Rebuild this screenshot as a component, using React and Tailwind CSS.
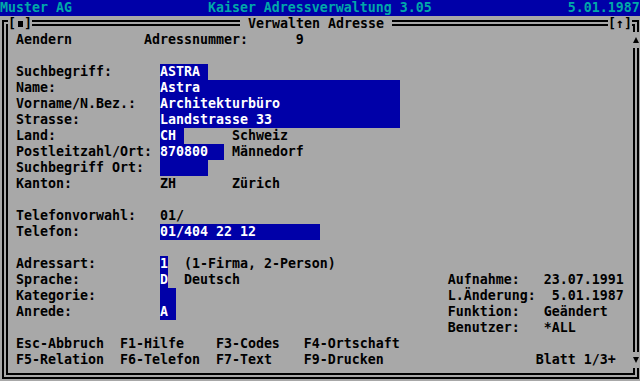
import React from 'react'

const BLUE = 'bg-[#0000a8]'

function Field({ text = '', w }) {
  return (
    <span className={`inline-block h-4 align-top ${BLUE} text-white`}>{text.padEnd(w)}</span>
  )
}

function Line({ children }) {
  return <div className="h-4 leading-4 whitespace-pre">{children}</div>
}

function Entry({ label, children }) {
  return (
    <Line>
      {label.padEnd(18)}
      {children}
    </Line>
  )
}

export default function App() {
  return (
    <div className="w-[640px] h-[381px] overflow-hidden bg-[#a8a8a8] text-black font-['DejaVu_Sans_Mono','Liberation_Mono',monospace] text-[13.29px] font-bold">
      {/* Statuszeile oben */}
      <div className={`h-4 leading-4 whitespace-pre ${BLUE} text-[#00a8a8]`}>
        {'Muster AG'.padEnd(26) + 'Kaiser Adressverwaltung 3.05'.padEnd(45) + '5.01.1987'}
      </div>

      {/* Fenster */}
      <div className="relative h-[365px] pt-[4px]">
        <div className="ml-[2px] mr-[1px] h-[359px] border-[6px] border-double border-black pt-[6px] pl-[8px]">
          <Line>{'Aendern'.padEnd(16) + 'Adressnummer:'.padEnd(19) + '9'}</Line>
          <Line />
          <Entry label="Suchbegriff:"><Field text="ASTRA" w={6} /></Entry>
          <Entry label="Name:"><Field text="Astra" w={30} /></Entry>
          <Entry label="Vorname/N.Bez.:"><Field text="Architekturbüro" w={30} /></Entry>
          <Entry label="Strasse:"><Field text="Landstrasse 33" w={30} /></Entry>
          <Entry label="Land:"><Field text="CH" w={3} />{'      Schweiz'}</Entry>
          <Entry label="Postleitzahl/Ort:"><Field text="870800" w={8} />{' Männedorf'}</Entry>
          <Entry label="Suchbegriff Ort:"><Field w={6} /></Entry>
          <Entry label="Kanton:">{'ZH'.padEnd(9) + 'Zürich'}</Entry>
          <Line />
          <Entry label="Telefonvorwahl:">01/</Entry>
          <Entry label="Telefon:"><Field text="01/404 22 12" w={20} /></Entry>
          <Line />
          <Entry label="Adressart:"><Field text="1" w={1} />{'  (1-Firma, 2-Person)'}</Entry>
          <Entry label="Sprache:"><Field text="D" w={1} />{'  Deutsch'.padEnd(35) + 'Aufnahme:'.padEnd(12) + '23.07.1991'}</Entry>
          <Entry label="Kategorie:"><Field w={2} />{''.padEnd(34) + 'L.Änderung:'.padEnd(12) + ' 5.01.1987'}</Entry>
          <Entry label="Anrede:"><Field text="A" w={2} />{''.padEnd(34) + 'Funktion:'.padEnd(12) + 'Geändert'}</Entry>
          <Line>{''.padEnd(54) + 'Benutzer:'.padEnd(12) + '*ALL'}</Line>
          <Line>{'Esc-Abbruch'.padEnd(13) + 'F1-Hilfe'.padEnd(12) + 'F3-Codes'.padEnd(11) + 'F4-Ortschaft'}</Line>
          <Line>{'F5-Relation'.padEnd(13) + 'F6-Telefon'.padEnd(12) + 'F7-Text'.padEnd(11) + 'F9-Drucken'.padEnd(29) + 'Blatt 1/3+'}</Line>
        </div>

        {/* Titel und Knöpfe über dem Rahmen */}
        <div className="absolute left-[8px] top-0 h-4 leading-4 whitespace-pre bg-[#a8a8a8] flex items-center">
          [<span className="w-2 h-4 flex items-center justify-center"><span className="w-[5px] h-[6px] bg-black" /></span>]
        </div>
        <div className="absolute left-[240px] top-0 h-4 leading-4 whitespace-pre bg-[#a8a8a8]">{' Verwalten Adresse '}</div>
        <div className="absolute left-[608px] top-0 h-4 leading-4 whitespace-pre bg-[#a8a8a8]">[↑]</div>
        {/* Scrollpfeile */}
        <div className="absolute left-[632px] top-[16px] w-2 h-4 bg-[#a8a8a8] flex items-center justify-center">
          <span className="w-0 h-0 border-x-[3px] border-x-transparent border-b-[6px] border-b-black" />
        </div>
        <div className="absolute left-[632px] top-[336px] w-2 h-4 bg-[#a8a8a8] flex items-center justify-center">
          <span className="w-0 h-0 border-x-[3px] border-x-transparent border-t-[6px] border-t-black" />
        </div>
      </div>
    </div>
  )
}
